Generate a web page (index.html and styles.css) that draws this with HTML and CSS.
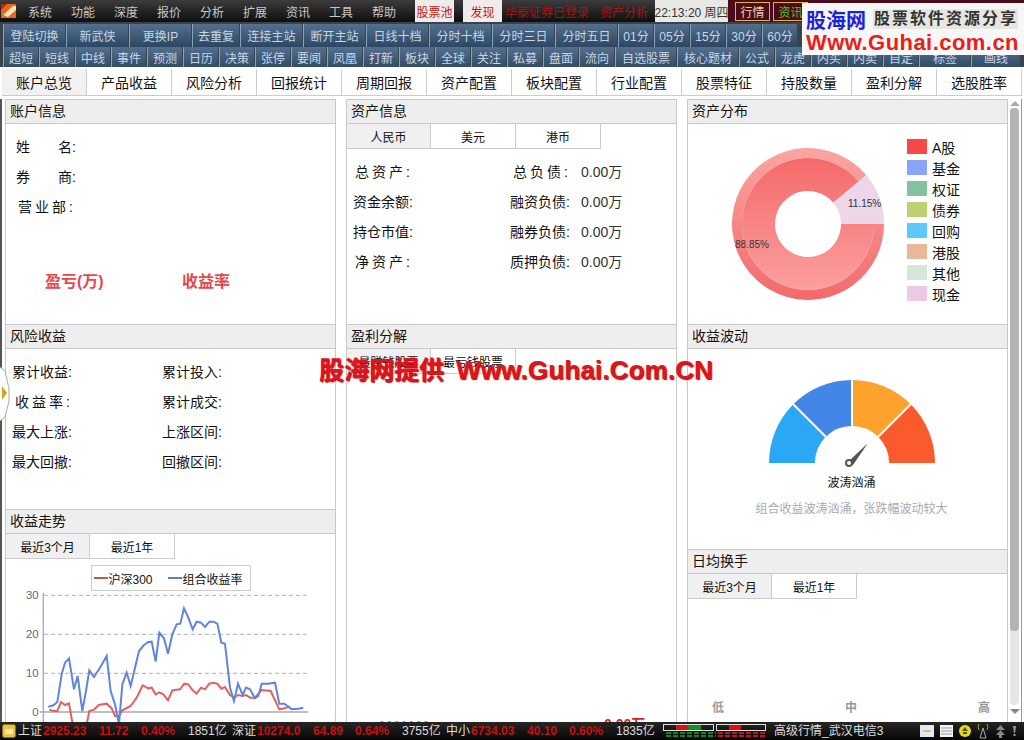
FILE: index.html
```html
<!DOCTYPE html>
<html lang="zh-CN">
<head>
    <title>资产分析</title>
    <meta charset="utf-8">
    <link rel="stylesheet" href="styles.css">
</head>
<body>
    <!-- top menu -->
    <div class="topbar">
        <svg class="app-icon" width="18" height="18" viewBox="0 0 18 18"><rect x="1" y="2" width="15" height="14" fill="#e8651a"/><path d="M3 13 L13 4 L16 4 L16 8 L8 15 Z" fill="#f7e3b0"/><path d="M1 2 H7 L1 8 Z" fill="#b3260f"/></svg>
        <a class="menu">系统</a><a class="menu">功能</a><a class="menu">深度</a><a class="menu">报价</a><a class="menu">分析</a><a class="menu">扩展</a><a class="menu">资讯</a><a class="menu">工具</a><a class="menu">帮助</a>
        <span class="top-btn pool">股票池</span>
        <span class="top-btn find">发现</span>
        <span class="login">华泰证券已登录</span>
        <span class="login assets">资产分析</span>
        <span class="clock">22:13:20 周四</span>
        <div class="top-right">
            <span class="mode">行情</span>
            <span class="mode green">资讯</span>
        </div>
    </div>

    <!-- toolbars -->
    <div class="tools">
        <div class="tool-row">
            <a class="tb w62">登陆切换</a><a class="tb w62">新武侠</a><a class="tb w62">更换IP</a><a class="tb w47">去重复</a><a class="tb w62">连接主站</a><a class="tb w62">断开主站</a><a class="tb w62">日线十档</a><a class="tb w62">分时十档</a><a class="tb w62">分时三日</a><a class="tb w62">分时五日</a><a class="tb w35">01分</a><a class="tb w35">05分</a><a class="tb w35">15分</a><a class="tb w35">30分</a><a class="tb w35">60分</a>
        </div>
        <div class="tool-row short">
            <a class="tb w35">超短</a><a class="tb w35">短线</a><a class="tb w35">中线</a><a class="tb w35">事件</a><a class="tb w35">预测</a><a class="tb w35">日历</a><a class="tb w35">决策</a><a class="tb w35">张停</a><a class="tb w35">要闻</a><a class="tb w35">凤凰</a><a class="tb w35">打新</a><a class="tb w35">板块</a><a class="tb w35">全球</a><a class="tb w35">关注</a><a class="tb w35">私募</a><a class="tb w35">盘面</a><a class="tb w35">流向</a><a class="tb w61">自选股票</a><a class="tb w61">核心题材</a><a class="tb w35">公式</a><a class="tb w35">龙虎</a><a class="tb w35">内买</a><a class="tb w35">内卖</a><a class="tb w35">自定</a><a class="tb w51">标签</a><a class="tb w49">画线</a>
        </div>
    </div>

    <div class="logo">
        <div class="logo-top"><span class="logo-name">股海网</span><span class="logo-slogan">股票软件资源分享</span></div>
        <div class="logo-url">Www.Guhai.com.cn</div>
    </div>

    <!-- page tabs -->
    <div class="tabs">
        <a class="tab active">账户总览</a><a class="tab">产品收益</a><a class="tab">风险分析</a><a class="tab">回报统计</a><a class="tab">周期回报</a><a class="tab">资产配置</a><a class="tab">板块配置</a><a class="tab">行业配置</a><a class="tab">股票特征</a><a class="tab">持股数量</a><a class="tab">盈利分解</a><a class="tab">选股胜率</a>
    </div>

    <div class="main">
        <div class="col">
            <div class="panel h225">
                <div class="panel-title">账户信息</div>
                <div class="info account">
                    <div>姓　　名:</div>
                    <div>券　　商:</div>
                    <div class="wide">营业部:</div>
                </div>
                <div class="pnl">
                    <span>盈亏(万)</span>
                    <span>收益率</span>
                </div>
            </div>
            <div class="panel h185">
                <div class="panel-title">风险收益</div>
                <div class="risk">
                    <div>累计收益:</div><div>累计投入:</div>
                    <div class="wide">收益率:</div><div>累计成交:</div>
                    <div>最大上涨:</div><div>上涨区间:</div>
                    <div>最大回撤:</div><div>回撤区间:</div>
                </div>
            </div>
            <div class="panel grow">
                <div class="panel-title">收益走势</div>
                <div class="subtabs">
                    <a class="subtab active">最近3个月</a><a class="subtab">最近1年</a>
                </div>
                <div class="chart-legend">
                    <span class="key red"></span>沪深300
                    <span class="key blue"></span>组合收益率
                </div>
                <svg class="trend" width="329" height="130" viewBox="18 276 987 390">
                    <g class="grid-lines">
                        <line x1="132" y1="283" x2="920" y2="283"/>
                        <line x1="132" y1="400" x2="920" y2="400"/>
                        <line x1="132" y1="517" x2="920" y2="517"/>
                    </g>
                    <line class="axis" x1="130" y1="276" x2="130" y2="666"/>
                    <line class="axis" x1="120" y1="633" x2="925" y2="633"/>
                    <g class="ticks">
                        <text x="116" y="294">30</text>
                        <text x="116" y="411">20</text>
                        <text x="116" y="528">10</text>
                        <text x="116" y="645">0</text>
                    </g>
                    <polyline class="line-red" points="148,626 160,630 172,630 183,603 195,612 207,607 218,670 225,720 250,720 260,670 268,630 282,626 296,612 320,608 335,622 345,645 357,645 367,628 392,615 410,590 428,553 445,562 455,560 467,580 478,574 490,580 504,598 517,568 540,565 553,548 565,550 578,568 590,578 603,560 615,565 628,548 640,545 652,548 664,563 675,558 690,582 702,590 714,582 728,585 738,582 750,590 765,590 785,567 812,570 838,625 853,622 870,616"/>
                    <polyline class="line-blue" points="145,617 160,613 172,603 185,520 195,485 207,472 222,565 233,525 247,630 258,570 268,508 282,528 300,500 320,465 332,570 345,610 357,670 367,550 380,515 392,555 405,500 417,450 432,432 445,423 455,422 467,482 478,395 492,412 504,458 517,400 530,370 541,368 552,322 565,350 578,385 590,362 603,365 615,378 628,362 640,362 652,368 664,425 675,428 690,560 702,600 714,548 728,582 738,560 750,565 765,592 775,585 785,548 805,548 825,545 838,608 853,608 875,625 895,623 910,620"/>
                </svg>
            </div>
        </div>

        <div class="col">
            <div class="panel h225">
                <div class="panel-title">资产信息</div>
                <div class="subtabs">
                    <a class="subtab active">人民币</a><a class="subtab">美元</a><a class="subtab">港币</a>
                </div>
                <div class="assets-grid">
                    <div class="wide">总资产:</div><div class="right"><span class="wide">总负债:</span><b>0.00万</b></div>
                    <div>资金余额:</div><div class="right"><span>融资负债:</span><b>0.00万</b></div>
                    <div>持仓市值:</div><div class="right"><span>融券负债:</span><b>0.00万</b></div>
                    <div class="wide">净资产:</div><div class="right"><span>质押负债:</span><b>0.00万</b></div>
                </div>
            </div>
            <div class="panel grow">
                <div class="panel-title">盈利分解</div>
                <div class="subtabs">
                    <a class="subtab active">最赚钱股票</a><a class="subtab">最亏钱股票</a>
                </div>
                <span class="cut-gray">- - - - - - -</span>
                <span class="cut-red">0.00万</span>
            </div>
        </div>

        <div class="col">
            <div class="panel h225">
                <div class="panel-title">资产分布</div>
                <div class="dist">
                    <svg class="donut" width="160" height="160" viewBox="0 0 160 160">
                        <defs>
                            <linearGradient id="rim" x1="0" y1="0" x2="0" y2="1"><stop offset="0" stop-color="#f9a6a2"/><stop offset="1" stop-color="#f26a6a"/></linearGradient>
                            <linearGradient id="body" x1="0" y1="0" x2="0" y2="1"><stop offset="0" stop-color="#f56a6a"/><stop offset="1" stop-color="#fb9f9f"/></linearGradient>
                        </defs>
                        <path fill="url(#rim)" d="M138.2,31.1 A76,76 0 1 0 156,80 L146,80 A66,66 0 1 1 130.6,37.6 Z"/>
                        <path fill="url(#body)" d="M130.6,37.6 A66,66 0 1 0 146,80 L113,80 A33,33 0 1 1 105.3,58.8 Z"/>
                        <path fill="#edd6ea" d="M156,80 A76,76 0 0 0 138.2,31.1 L105.3,58.8 A33,33 0 0 1 113,80 Z"/>
                        <text x="120" y="63">11.15%</text>
                        <text x="7" y="104">88.85%</text>
                    </svg>
                    <ul class="legend">
                        <li><i class="c1"></i>A股</li>
                        <li><i class="c2"></i>基金</li>
                        <li><i class="c3"></i>权证</li>
                        <li><i class="c4"></i>债券</li>
                        <li><i class="c5"></i>回购</li>
                        <li><i class="c6"></i>港股</li>
                        <li><i class="c7"></i>其他</li>
                        <li><i class="c8"></i>现金</li>
                    </ul>
                </div>
            </div>
            <div class="panel h225">
                <div class="panel-title">收益波动</div>
                <div class="gauge">
                    <svg width="170" height="100" viewBox="0 0 170 100">
                        <path fill="#2ba8f5" d="M2,85 A83,83 0 0 1 26.3,26.3 L58.8,58.8 A37,37 0 0 0 48,85 Z"/>
                        <path fill="#4286e8" d="M26.3,26.3 A83,83 0 0 1 85,2 L85,48 A37,37 0 0 0 58.8,58.8 Z"/>
                        <path fill="#fca22d" d="M85,2 A83,83 0 0 1 143.7,26.3 L111.2,58.8 A37,37 0 0 0 85,48 Z"/>
                        <path fill="#fb5a2c" d="M143.7,26.3 A83,83 0 0 1 168,85 L122,85 A37,37 0 0 0 111.2,58.8 Z"/>
                        <g class="gauge-gaps">
                            <line x1="26.3" y1="26.3" x2="58.8" y2="58.8"/>
                            <line x1="85" y1="2" x2="85" y2="48"/>
                            <line x1="143.7" y1="26.3" x2="111.2" y2="58.8"/>
                        </g>
                        <path fill="#555" d="M101,65 L86,87 L82,83 Z"/>
                        <circle cx="82" cy="85" r="3" fill="#fff" stroke="#555" stroke-width="2"/>
                    </svg>
                    <div class="gauge-name">波涛汹涌</div>
                    <div class="gauge-note">组合收益波涛汹涌，张跌幅波动较大</div>
                </div>
            </div>
            <div class="panel grow">
                <div class="panel-title">日均换手</div>
                <div class="subtabs">
                    <a class="subtab active">最近3个月</a><a class="subtab">最近1年</a>
                </div>
                <div class="levels"><span>低</span><span>中</span><span>高</span></div>
            </div>
        </div>

        <div class="scrollbar">
            <span class="arrow-up"></span>
            <div class="track"><div class="thumb"></div></div>
            <span class="arrow-down"></span>
        </div>
    </div>

    <!-- overlays -->
    <div class="watermark">股海网提供 <span>Www.Guhai.Com.CN</span></div>
    <svg class="handle" width="10" height="54" viewBox="0 0 10 54">
        <path d="M0,0 L5,4 L9,22 L9,34 L5,50 L0,54" fill="#fff" stroke="#aaa"/>
        <path d="M2,19 L7,26 L2,33 Z" fill="#d9a020"/>
    </svg>

    <!-- status bar -->
    <div class="status">
        <svg class="st-icon" width="14" height="14" viewBox="0 0 14 14"><rect x="0.5" y="0.5" width="13" height="13" rx="2" fill="#e8c34a" stroke="#8a6d1a"/><rect x="3" y="5" width="8" height="5" fill="#f8e9a0"/></svg>
        <div class="idx"><span class="name">上证</span><span class="p">2925.23</span><span class="c">11.72</span><span class="r">0.40%</span><span class="a">1851亿</span></div>
        <div class="idx"><span class="name">深证</span><span class="p">10274.0</span><span class="c">64.89</span><span class="r">0.64%</span><span class="a">3755亿</span></div>
        <div class="idx"><span class="name">中小</span><span class="p">6734.03</span><span class="c">40.10</span><span class="r">0.60%</span><span class="a">1835亿</span></div>
        <svg class="meter" width="106" height="16" viewBox="0 0 106 16">
            <g fill="none" stroke="#ddd"><rect x="2.5" y="1.5" width="50" height="6"/><rect x="55.5" y="1.5" width="49" height="6"/></g>
            <rect x="15" y="2" width="12" height="5" fill="#e01010"/><rect x="27" y="2" width="13" height="5" fill="#109020"/><rect x="68" y="2" width="12" height="5" fill="#e01010"/>
            <path d="M5 10h50M5 13h50" stroke="#0b8a1a" stroke-width="2" stroke-dasharray="5 2"/>
            <path d="M57 10h48M57 13h48" stroke="#c81414" stroke-width="2" stroke-dasharray="5 2"/>
        </svg>
        <span class="server">高级行情_武汉电信3</span>
        <div class="tray">
            <svg width="14" height="12" viewBox="0 0 14 12"><rect width="14" height="12" fill="#dfeaf5"/><path d="M3 6h8" stroke="#e0c060" stroke-width="2"/></svg>
            <svg width="13" height="12" viewBox="0 0 13 12"><rect width="13" height="12" fill="#f4f4f4"/><path d="M1 3h11M1 6h11M1 9h11" stroke="#999"/></svg>
            <svg width="12" height="12" viewBox="0 0 12 12"><circle cx="6" cy="6" r="6" fill="#e6d820"/><path d="M6 2 L9 6 H3 Z M4 7 H8 V9 H4 Z" fill="#5a5200"/></svg>
            <svg width="12" height="16" viewBox="0 0 12 16"><path d="M6 5 L3 15 H9 Z" fill="none" stroke="#aaa"/><path d="M2 1 Q0 4 2 7 M10 1 Q12 4 10 7" fill="none" stroke="#a89a30"/></svg>
            <svg width="11" height="13" viewBox="0 0 11 13"><path d="M5.5 0 L10 5 H1 Z M5.5 5 L10 10 H1 Z M4 10 H7 V13 H4 Z" fill="#888"/></svg>
            <svg width="5" height="12" viewBox="0 0 5 12"><path d="M1 1 H4 L3 8 H2 Z M1.5 9 H3.5 V11 H1.5 Z" fill="#999"/></svg>
        </div>
    </div>
</body>
</html>
```

FILE: styles.css
```css
* { box-sizing: border-box; }
html, body { margin: 0; padding: 0; }
body {
    position: relative;
    width: 1024px;
    height: 740px;
    overflow: hidden;
    background: #fff;
    color: #111;
    font-family: "Liberation Sans", "Noto Sans CJK SC", sans-serif;
    font-size: 14px;
}

/* top menu */
.topbar {
    display: flex;
    align-items: center;
    height: 22px;
    background: linear-gradient(#3c3c3c, #0e0e0e);
    color: #c8c8c8;
    font-size: 12px;
}
.app-icon { flex: none; width: 18px; }
.menu { width: 43px; padding-left: 10px; flex: none; white-space: nowrap; }
.top-btn {
    display: flex;
    align-items: center;
    justify-content: center;
    height: 22px;
    background: #f0eaea;
    color: #c01818;
    flex: none;
}
.pool { width: 39px; margin-left: 10px; }
.find { width: 39px; margin-left: 9px; }
.login { color: #b01010; margin-left: 3px; white-space: nowrap; flex: none; }
.assets { margin-left: 11px; }
.clock {
    display: flex;
    align-items: center;
    justify-content: center;
    width: 73px;
    height: 22px;
    margin-left: 7px;
    background: #e8e8e4;
    color: #333;
    white-space: nowrap;
    flex: none;
}
.top-right {
    display: flex;
    align-items: center;
    gap: 3px;
    flex: 1;
    height: 22px;
    padding-left: 7px;
    background: #4a0c18;
}
.mode {
    display: flex;
    align-items: center;
    justify-content: center;
    width: 35px;
    height: 19px;
    border: 1px solid #e8b040;
    color: #f0d0b0;
    flex: none;
}
.mode.green { color: #58c030; }

/* toolbars */
.tools {
    height: 45px;
    padding-top: 2px;
    background: #3a424a;
}
.tool-row {
    display: flex;
    gap: 1px;
    height: 23px;
    padding-left: 3px;
    overflow: hidden;
}
.tool-row.short { height: 20px; }
.tb {
    display: flex;
    align-items: center;
    justify-content: center;
    height: 23px;
    background: linear-gradient(#54708e, #2c4763);
    border-left: 1px solid #8ea2b6;
    color: #c9d6e2;
    font-size: 12px;
    white-space: nowrap;
    flex: none;
}
.short .tb { height: 23px; padding-bottom: 2px; }
.w35 { width: 35px; }
.w47 { width: 47px; }
.w49 { width: 49px; }
.w51 { width: 51px; }
.w61 { width: 61px; }
.w62 { width: 62px; }

/* logo overlay */
.logo {
    position: absolute;
    left: 802px;
    top: 3px;
    width: 222px;
    height: 52px;
    padding: 3px 0 0 4px;
    background: rgba(255, 255, 255, 0.96);
}
.logo-top { display: flex; align-items: center; height: 26px; }
.logo-name { color: #1a22e0; font-size: 20px; font-weight: 700; }
.logo-slogan {
    margin-left: 7px;
    padding-left: 1px;
    background: #e6e6e2;
    color: #333;
    font-size: 16px;
    font-weight: 700;
    letter-spacing: 2px;
    line-height: 20px;
}
.logo-url {
    color: #e8201a;
    font-size: 22px;
    font-weight: 700;
    line-height: 22px;
    letter-spacing: 0.45px;
    white-space: nowrap;
}

/* page tabs */
.tabs {
    display: flex;
    height: 30px;
    padding: 2px 0 1px 2px;
    background: #fff;
    margin-bottom: 2px;
}
.tab {
    display: flex;
    align-items: center;
    justify-content: center;
    width: 85px;
    border-right: 1px solid #ccc;
    border-bottom: 1px solid #ccc;
    font-size: 14px;
    flex: none;
}
.tab.active { background: #f1f1f1; }

/* panels */
.main {
    display: grid;
    grid-template-columns: 331px 331px 321px 14px;
    column-gap: 10px;
    height: 623px;
    border-left: 2px solid #555;
    padding-left: 3px;
    overflow: hidden;
}
.col { display: flex; flex-direction: column; height: 623px; }
.panel {
    position: relative;
    display: flex;
    flex-direction: column;
    border-left: 1px solid #c8c8c8;
    border-right: 1px solid #c8c8c8;
    overflow: hidden;
    flex: none;
}
.h225 { height: 225px; }
.h185 { height: 185px; }
.grow { flex: 1; }
.panel-title {
    height: 25px;
    line-height: 23px;
    padding-left: 4px;
    background: #eee;
    border-top: 1px solid #c8c8c8;
    border-bottom: 1px solid #c8c8c8;
    flex: none;
}
.subtabs { display: flex; height: 25px; flex: none; }
.subtab {
    display: flex;
    align-items: center;
    justify-content: center;
    width: 85px;
    border-right: 1px solid #ccc;
    border-bottom: 1px solid #ccc;
    font-size: 12px;
}
.subtab.active { width: 84px; background: #f0f0f0; }

/* account */
.info { padding: 13px 0 0 10px; }
.info div { height: 30px; line-height: 20px; }
.wide { letter-spacing: 3px; }
.account .wide { padding-left: 2px; }
.pnl {
    display: flex;
    margin-top: 41px;
    padding-left: 39px;
    color: #e5474c;
    font-size: 16px;
    font-weight: 700;
}
.pnl span { width: 137px; }

/* risk */
.risk {
    display: grid;
    grid-template-columns: 150px 1fr;
    grid-auto-rows: 30px;
    padding: 13px 0 0 6px;
    line-height: 20px;
}
.risk .wide { padding-left: 3px; }

/* asset info */
.assets-grid {
    display: grid;
    grid-template-columns: 157px 1fr;
    grid-auto-rows: 30px;
    padding: 13px 0 0 6px;
    line-height: 20px;
}
.assets-grid > .wide { padding-left: 2px; }
.right { display: flex; }
.right span { width: 71px; white-space: nowrap; }
.right .wide { padding-left: 3px; }
.right b { color: #333; font-weight: 400; }
.cut-gray {
    position: absolute;
    left: 33px;
    bottom: -6px;
    color: #999;
    font-size: 12px;
}
.cut-red {
    position: absolute;
    left: 257px;
    bottom: -11px;
    color: #e02020;
    font-size: 14px;
    font-weight: 700;
}

/* trend chart */
.chart-legend {
    display: flex;
    align-items: center;
    align-self: center;
    width: 160px;
    height: 26px;
    margin-top: 6px;
    padding-left: 2px;
    border: 1px solid #ccc;
    font-size: 12px;
    white-space: nowrap;
    flex: none;
}
.key { display: inline-block; width: 14px; height: 2px; margin-right: 1px; }
.key.red { background: #c05a5a; }
.key.blue { margin-left: 15px; background: #5c7fc4; }
.trend { display: block; margin-top: 2px; overflow: visible; flex: none; }
.grid-lines line { stroke: #888; stroke-width: 2; stroke-dasharray: 12 9; }
.axis { stroke: #aaa; stroke-width: 4; }
.ticks text { fill: #666; font-size: 34px; text-anchor: end; }
.line-red { fill: none; stroke: #e46060; stroke-width: 6; }
.line-blue { fill: none; stroke: #5f86d8; stroke-width: 6; }

/* asset distribution */
.dist { display: flex; }
.donut { margin: 20px 0 0 40px; flex: none; }
.donut text { fill: #333; font-size: 10px; }
.legend { margin: 12px 0 0 19px; padding: 0; list-style: none; }
.legend li { display: flex; align-items: center; height: 21px; white-space: nowrap; }
.legend i { width: 20px; height: 15px; margin-right: 5px; }
.c1 { background: #f94848; }
.c2 { background: #8aa4f8; }
.c3 { background: #84c2a0; }
.c4 { background: #bfd070; }
.c5 { background: #5cc8fc; }
.c6 { background: #e8b898; }
.c7 { background: #d6e6da; }
.c8 { background: #eccae4; }

/* gauge */
.gauge { display: flex; flex-direction: column; align-items: center; padding: 29px 0 0 8px; }
.gauge svg { display: block; }
.gauge-gaps line { stroke: #fff; stroke-width: 2; }
.gauge-name { margin-top: -4px; font-size: 12px; line-height: 18px; }
.gauge-note { margin-top: 8px; color: #aaa; font-size: 12px; line-height: 18px; }

.levels {
    display: flex;
    justify-content: space-between;
    margin-top: auto;
    padding: 0 17px 5px 24px;
    color: #999;
    font-size: 12px;
    font-weight: 700;
    line-height: 18px;
}

/* scrollbar */
.scrollbar {
    display: flex;
    flex-direction: column;
    align-items: flex-start;
    margin-left: -10px;
    padding: 2px 0 0 2px;
    width: 14px;
    border-right: 1px solid #999;
}
.arrow-up, .arrow-down { width: 0; height: 0; border-left: 5px solid transparent; border-right: 5px solid transparent; flex: none; }
.arrow-up { border-bottom: 5px solid #aaa; }
.arrow-down { border-top: 5px solid #888; margin-top: 4px; }
.track { width: 9px; height: 597px; margin-top: 2px; background: #e6e6e6; border-radius: 4px; flex: none; }
.thumb { height: 523px; background: #b4b4b4; border-radius: 4px; }

/* overlays */
.watermark {
    position: absolute;
    left: 319px;
    top: 353px;
    color: #e0141e;
    font-size: 25px;
    font-weight: 700;
    line-height: 34px;
    white-space: nowrap;
    text-shadow: 1px 1px 1px #a01018;
}
.watermark span { margin-left: 5px; font-size: 26px; letter-spacing: 0.15px; }
.handle { position: absolute; left: 0; top: 367px; }

/* status bar */
.status {
    display: flex;
    align-items: center;
    height: 18px;
    padding-left: 2px;
    background: linear-gradient(#262626, #050505);
    color: #ddd;
    font-size: 12px;
    line-height: 18px;
}
.st-icon { flex: none; margin-right: 2px; }
.idx { display: flex; align-items: center; height: 18px; flex: none; white-space: nowrap; }
.idx span { display: block; height: 18px; line-height: 18px; flex: none; }
.name { width: 25px; }
.p { width: 56px; }
.c { width: 42px; }
.r { width: 47px; }
.p, .c, .r { color: #c81010; font-weight: 700; }
.a { width: 44px; }
.meter { flex: none; margin-left: 1px; }
.server { margin-left: 7px; white-space: nowrap; flex: none; }
.tray { display: flex; align-items: center; gap: 6px; margin-left: auto; padding-right: 7px; }
```
